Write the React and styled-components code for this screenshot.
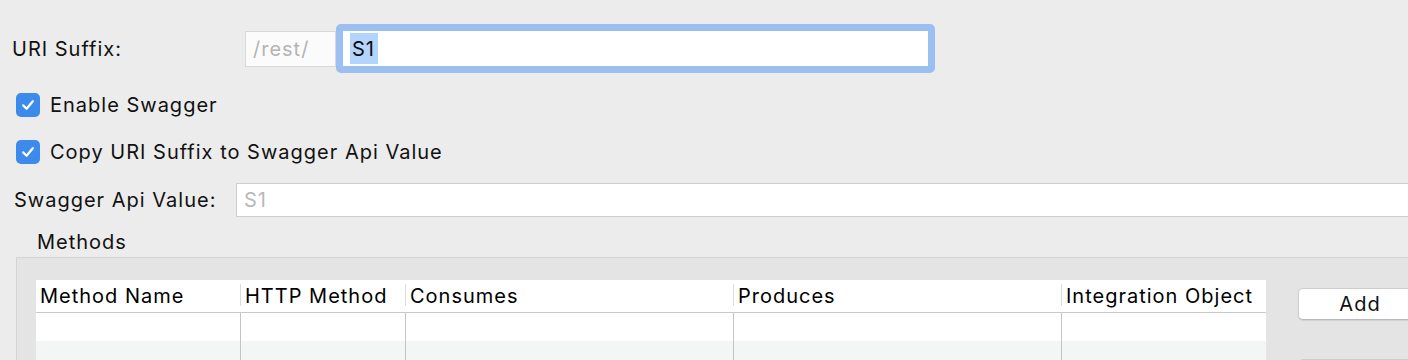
import React from "react";
import styled, { createGlobalStyle } from "styled-components";

const GlobalStyle = createGlobalStyle`
  html, body {
    margin: 0;
    padding: 0;
    background: #ececec;
    overflow: hidden;
  }
  body {
    font-family: Inter, "Liberation Sans", sans-serif;
    font-size: 20px;
    letter-spacing: 1px;
    color: #111;
  }
`;

const StyledWrapper = styled.div`
  width: 1408px;
  height: 360px;
  overflow: hidden;
  padding-top: 24px;
  box-sizing: border-box;
`;
const StyledFieldRow = styled.div`
  display: flex;
  align-items: center;
  height: ${({ height }) => height}px;
  padding-left: ${({ indent }) => indent}px;
  margin-top: ${({ top }) => top || 0}px;
`;
const StyledLabel = styled.label`
  width: ${({ width }) => width}px;
  flex-shrink: 0;
  white-space: nowrap;
`;
const StyledPrefix = styled.div`
  width: 91px;
  height: 36px;
  box-sizing: border-box;
  border: 1px solid #d8d8d8;
  background: #fbfbfb;
  color: #b4b4b4;
  display: flex;
  align-items: center;
  padding-left: 7px;
`;
const StyledFocusInput = styled.div`
  width: 599px;
  height: 49px;
  box-sizing: border-box;
  border: 7px solid #9bbff0;
  border-radius: 5px;
  background: #fff;
  display: flex;
  align-items: center;
  padding-left: 7px;
`;
const StyledSelection = styled.span`
  background: #b3d5fd;
  height: 31px;
  display: flex;
  align-items: center;
  padding: 0 3px 0 2px;
  color: #0a0a0a;
`;
const StyledTextInput = styled.div`
  flex: 1;
  height: 34px;
  box-sizing: border-box;
  border: 1px solid #cfcfcf;
  border-right: none;
  background: #fff;
  color: ${({ disabled }) => (disabled ? "#b9b9b9" : "#111")};
  display: flex;
  align-items: center;
  padding-left: 7px;
`;
const StyledCheckRow = styled.label`
  display: flex;
  align-items: center;
  gap: 10px;
  height: 24px;
  padding-left: 16px;
  margin-top: ${({ top }) => top}px;
`;
const StyledCheckbox = styled.span`
  width: 24px;
  height: 24px;
  border-radius: 5px;
  background: #3c8bec;
  display: flex;
  align-items: center;
  justify-content: center;
  flex-shrink: 0;
`;
const StyledGroupTitle = styled.div`
  padding-left: 37px;
  margin-top: 12px;
  height: 26px;
  line-height: 26px;
  margin-bottom: 2px;
`;
const StyledGroupBox = styled.div`
  margin-left: 16px;
  width: 1500px;
  height: 120px;
  box-sizing: border-box;
  border: 1px solid #d4d4d4;
  background: #e4e4e4;
  padding: 22px 0 0 19px;
  display: flex;
  align-items: flex-start;
  gap: 32px;
`;
const StyledTable = styled.div`
  width: 1230px;
  background: #fff;
  display: grid;
  grid-template-columns: 204px 165px 328px 328px 205px;
`;
const StyledHeaderCell = styled.div`
  height: 33px;
  box-sizing: border-box;
  border-bottom: 1px solid #c9c9c9;
  display: flex;
  align-items: center;
  padding: 0 0 1px ${({ first }) => (first ? 4 : 5)}px;
  color: #000;
  position: relative;
  white-space: nowrap;
  &:before {
    content: "";
    display: ${({ first }) => (first ? "none" : "block")};
    position: absolute;
    left: 0;
    top: 4px;
    bottom: 6px;
    width: 1px;
    background: #dcdcdc;
  }
`;
const StyledCell = styled.div`
  height: 28px;
  background: ${({ striped }) => (striped ? "#f4f5f5" : "#fff")};
  border-left: ${({ first }) => (first ? "none" : "1px solid #c4c4c4")};
`;
const StyledButton = styled.button`
  margin-top: 8px;
  width: 124px;
  height: 32px;
  flex-shrink: 0;
  border: 1px solid #cdcdcd;
  border-bottom-color: #b9b9b9;
  border-radius: 5px;
  background: #fff;
  font: inherit;
  letter-spacing: inherit;
  color: #111;
  box-shadow: 0 1px 1px rgba(0, 0, 0, 0.08);
  padding: 0;
`;
const StyledButtonStack = styled.div`
  display: flex;
  flex-direction: column;
  gap: 31px;
`;

const Check = () => (
  <StyledCheckbox>
    <svg width="16" height="16" viewBox="0 0 16 16">
      <path
        d="M3.2 8.4 L6.6 11.8 L12.8 4.2"
        fill="none"
        stroke="#fff"
        strokeWidth="2.2"
        strokeLinecap="round"
        strokeLinejoin="round"
      />
    </svg>
  </StyledCheckbox>
);

const columns = [
  "Method Name",
  "HTTP Method",
  "Consumes",
  "Produces",
  "Integration Object"
];

const App = () => (
  <>
    <GlobalStyle />
    <StyledWrapper>
      <StyledFieldRow height={49} indent={12}>
        <StyledLabel width={233}>URI Suffix:</StyledLabel>
        <StyledPrefix>/rest/</StyledPrefix>
        <StyledFocusInput>
          <StyledSelection>S1</StyledSelection>
        </StyledFocusInput>
      </StyledFieldRow>
      <StyledCheckRow top={20}>
        <Check />
        Enable Swagger
      </StyledCheckRow>
      <StyledCheckRow top={23}>
        <Check />
        Copy URI Suffix to Swagger Api Value
      </StyledCheckRow>
      <StyledFieldRow height={34} indent={14} top={19}>
        <StyledLabel width={222}>Swagger Api Value:</StyledLabel>
        <StyledTextInput disabled>S1</StyledTextInput>
      </StyledFieldRow>
      <StyledGroupTitle>Methods</StyledGroupTitle>
      <StyledGroupBox>
        <StyledTable>
          {columns.map((c, i) => (
            <StyledHeaderCell key={c} first={i === 0}>
              {c}
            </StyledHeaderCell>
          ))}
          {columns.map((c, i) => (
            <StyledCell key={"a" + c} first={i === 0} />
          ))}
          {columns.map((c, i) => (
            <StyledCell key={"b" + c} first={i === 0} striped />
          ))}
        </StyledTable>
        <StyledButtonStack>
          <StyledButton>Add</StyledButton>
          <StyledButton aria-label="Remove" />
        </StyledButtonStack>
      </StyledGroupBox>
    </StyledWrapper>
  </>
);

export default App;
